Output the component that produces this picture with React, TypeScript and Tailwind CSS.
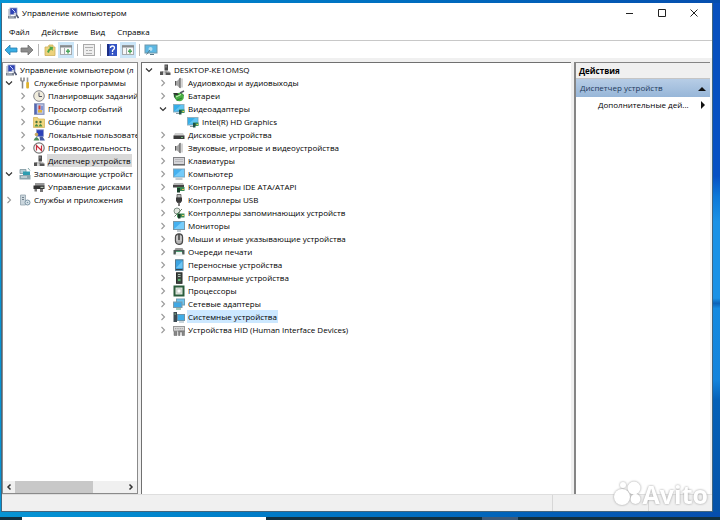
import { ReactNode } from "react";

type IconName =
  | "mgmt" | "tools" | "clock" | "events" | "folders" | "users" | "perf" | "device" | "storage" | "disks" | "services"
  | "speaker" | "battery" | "display" | "drive" | "keyboard" | "computer" | "ide" | "usb" | "storctl" | "monitor"
  | "mouse" | "printer" | "portable" | "software" | "cpu" | "network" | "system" | "hid";

const art: Record<IconName, ReactNode> = {
  mgmt: (
    <>
      <path d="M1 2h3v8H1z" fill="#c9ced8" />
      <rect x="3" y="1" width="7" height="6.500" fill="#2f43b5" stroke="#9aa3c8" strokeWidth=".8" />
      <path d="M5 2l3 3" stroke="#c9d4ff" />
      <path d="M1 9h8v2.500H1z" fill="#77808f" />
      <path d="M2 10h5" stroke="#d5dae2" strokeWidth=".8" />
      <path d="M8 6l3.500 5" stroke="#4a5270" strokeWidth="1.600" />
      <circle cx="8" cy="7" r="1.400" fill="#c9cfe0" />
    </>
  ),
  tools: (
    <>
      <path d="M2 .5v3l1.500 1V11.500M5 .5v3l-1.500 1" stroke="#858585" strokeWidth="1.500" fill="none" />
      <path d="M8.500 .5v5" stroke="#999" strokeWidth="1.600" />
      <rect x="7.200" y="5" width="2.800" height="6.500" rx="1" fill="#dfb32e" />
    </>
  ),
  clock: (
    <>
      <circle cx="6" cy="6" r="5.300" fill="#f0ecdc" stroke="#85858c" />
      <path d="M6 2.500V6.500h3" stroke="#556" fill="none" />
    </>
  ),
  events: (
    <>
      <rect x="1.500" y=".8" width="9.500" height="10.500" fill="#bcc5e4" stroke="#7d89b5" />
      <path d="M2.800 1v10" stroke="#5268b5" strokeWidth="2" />
      <path d="M6.500 2.500v4" stroke="#cf3d33" strokeWidth="2" />
      <rect x="5" y="7" width="4" height="2.500" fill="#e0b63a" />
      <path d="M9 3v4" stroke="#4567c8" />
    </>
  ),
  folders: (
    <>
      <path d="M.5 1.500h4l1 1.500h6v8.500H.5z" fill="#f0d67c" stroke="#d2b052" strokeWidth=".7" />
      <circle cx="3.500" cy="6" r="1.200" fill="#49733d" />
      <circle cx="7.500" cy="6" r="1.200" fill="#49733d" />
      <path d="M1.500 10.500q2-5 4 0M5.500 10.500q2-5 4 0" fill="#4d8e46" />
    </>
  ),
  users: (
    <>
      <rect x="3.500" y=".8" width="7" height="6.500" fill="#2c41b8" stroke="#8e9ac6" strokeWidth=".8" />
      <circle cx="3.500" cy="5.500" r="1.800" fill="#c9a860" />
      <path d="M.5 11.500q3-7 6 0z" fill="#4d8b59" />
      <path d="M6.500 7.500h3l2.500 4H7z" fill="#4358a2" />
    </>
  ),
  perf: (
    <>
      <circle cx="6" cy="6" r="5.200" fill="#fff" stroke="#777" strokeWidth="1.200" />
      <path d="M3.500 8.500v-5l5 5v-5" stroke="#c52e3d" strokeWidth="1.200" fill="none" />
    </>
  ),
  device: (
    <>
      <path d="M5.500 .5h3.500v6H5.500z" fill="#4b4b4b" />
      <path d="M6.500 1.500h1v2h-1z" fill="#aaa" />
      <path d="M2.500 8h8M7 6v3" stroke="#888" />
      <path d="M1 7.500h3v3.500H1zM6.500 8.500h5V11h-5z" fill="#555" />
      <path d="M4 10h3" stroke="#aaa" />
    </>
  ),
  storage: (
    <>
      <path d="M1 1.500h6v4H1z" fill="#b9cfd6" stroke="#7c959e" strokeWidth=".8" />
      <path d="M4 3.500h7V7H4z" fill="#2f9db0" />
      <path d="M.5 7h11v4.500H.5z" fill="#8ca4ac" />
      <path d="M2 9h6" stroke="#eef3f5" />
      <path d="M9 0l2 2.500" stroke="#8aa" />
    </>
  ),
  disks: (
    <>
      <path d="M2 2h9.500v3H2z" fill="#999" />
      <path d="M.5 4.500h11v3.500H.5z" fill="#333" />
      <path d="M1.500 8h2.500v2.500H1.500zM7 8h3v3H7z" fill="#777" />
      <path d="M7.500 6.300h3" stroke="#d5e5d3" />
    </>
  ),
  services: (
    <>
      <path d="M1.500 1h5v10h-5z" fill="#cbd6dd" stroke="#93a3ad" strokeWidth=".8" />
      <path d="M3 3.500h2M3 5.500h2" stroke="#71818d" />
      <circle cx="8.500" cy="8.500" r="2.500" fill="#dbe6ec" stroke="#7c95a5" />
      <circle cx="8.500" cy="8.500" r=".8" fill="#7c95a5" />
    </>
  ),
  speaker: (
    <>
      <path d="M2 4h2l3.500-3.500v11L4 8.500H2z" fill="#a5a5a5" />
      <path d="M2.500 4v4.500M7 1v10" stroke="#555" />
      <path d="M9 1.500v9" stroke="#aaa" fill="none" />
    </>
  ),
  battery: (
    <>
      <path d="M.5 3h8l2.500 2-2 4-5 2-3-4z" fill="#2c5a36" />
      <circle cx="6.500" cy="7" r="4.300" fill="#48b043" />
      <path d="M3 7l5-2.500" stroke="#d1efc2" />
      <path d="M0 3h4l2 2H3z" fill="#333" />
      <path d="M7 3l4-2" stroke="#556" strokeWidth="1.500" />
      <path d="M4 10l5-2" stroke="#2f7a35" />
    </>
  ),
  display: (
    <>
      <rect x=".5" y="1.500" width="10.500" height="7.500" fill="#37aee8" stroke="#8fb0c0" />
      <path d="M1 8.500l7-6.500h2.500v4z" fill="#62c4f2" />
      <path d="M3 10.500h3" stroke="#8899a2" />
      <path d="M6 6.500h5.500V10H6z" fill="#3d9460" />
      <path d="M6 7h2.500v4.500H6z" fill="#1f5145" />
      <path d="M9.500 8.500h1.500" stroke="#eed34c" />
    </>
  ),
  drive: (
    <>
      <path d="M2 4h8l1.500 3H.5z" fill="#cfcfcf" />
      <rect x=".5" y="6.500" width="11" height="3.500" fill="#3a3a3a" />
      <path d="M8 8.500h2" stroke="#70b979" />
    </>
  ),
  keyboard: (
    <>
      <rect x=".5" y="2.500" width="11" height="7" fill="#d5d5d8" stroke="#808084" />
      <path d="M2 4.500h8M2 6.500h8" stroke="#b8b8bc" />
      <path d="M0 10h12" stroke="#555" />
    </>
  ),
  computer: (
    <>
      <rect x=".5" y="1" width="11" height="8" fill="#45b1f0" stroke="#83a5b8" />
      <path d="M1 8.500l8-7h2v7z" fill="#74cbfa" />
      <path d="M2.500 11h7" stroke="#8696a0" />
    </>
  ),
  ide: (
    <>
      <path d="M1 2h9l1 2H0z" fill="#b5b5b5" />
      <path d="M0 4h11v2.500H0z" fill="#444" />
      <rect x="4" y="6" width="7.500" height="4" fill="#3d8a55" />
      <path d="M4 7h3v4.500H4z" fill="#17402a" />
      <path d="M9 8.500h2" stroke="#e2c458" />
    </>
  ),
  usb: (
    <>
      <path d="M4 .5h4V4H4z" fill="#bbb" stroke="#555" strokeWidth=".8" />
      <path d="M3 3.500h6V7L7.500 9h-3L3 7z" fill="#3a3a3a" />
      <path d="M6 8v4" stroke="#555" strokeWidth="1.500" />
    </>
  ),
  storctl: (
    <>
      <circle cx="4" cy="4" r="3" fill="#e0e7df" stroke="#809085" />
      <path d="M1.500 9.500L9 2" stroke="#68806b" />
      <rect x="4" y="6.500" width="7.500" height="4" fill="#3f8d53" />
      <path d="M5 7h2.500v4.500H5z" fill="#193c2a" />
      <path d="M9 8.500h2" stroke="#eed273" />
    </>
  ),
  monitor: (
    <>
      <rect x=".5" y="1.500" width="11" height="8" fill="#45b1f0" stroke="#7898a8" />
      <path d="M1 9l8-7h2v7z" fill="#78cdfa" />
      <path d="M4 11h4" stroke="#84949e" />
    </>
  ),
  mouse: (
    <>
      <rect x="2.500" y=".8" width="7" height="10.500" rx="3.300" fill="#b5b5b5" stroke="#4a4a4a" strokeWidth="1.300" />
      <path d="M6 1v6" stroke="#333" strokeWidth="1.300" />
      <path d="M4 3v5M8 3v5" stroke="#e5e5e5" strokeWidth=".8" />
    </>
  ),
  printer: (
    <>
      <path d="M2.500 2h7L11 5H1z" fill="#999" />
      <path d="M.5 4h11v4.500H.5z" fill="#4b5a55" />
      <path d="M3 6h6l.5 4h-7z" fill="#f0f3f1" />
      <path d="M3 5.500h6" stroke="#4fa678" />
    </>
  ),
  portable: (
    <>
      <rect x="2.500" y=".8" width="7.500" height="10.500" fill="#3ba4e2" stroke="#56788c" />
      <path d="M3 9l6.500-7v7z" fill="#6cc4f4" />
      <path d="M3 10.500h6.500" stroke="#33434e" />
    </>
  ),
  software: (
    <>
      <rect x="3.500" y=".8" width="5.500" height="10.500" fill="#3e4a42" stroke="#2b2b2b" />
      <path d="M5 2.500h2.500M5 4.500h2.500" stroke="#b5beb8" />
      <path d="M5 8h2.500" stroke="#59b56d" strokeWidth="2" />
    </>
  ),
  cpu: (
    <>
      <rect x="1.500" y="1.500" width="9" height="9" fill="#e4ebe3" stroke="#2b5c3c" strokeWidth="2" />
      <rect x="4" y="4" width="4" height="4" fill="#fff" stroke="#a5b0a5" strokeWidth=".6" />
    </>
  ),
  network: (
    <>
      <rect x="3.500" y="1" width="8" height="6" fill="#6cc4f0" stroke="#6f9caf" />
      <rect x=".5" y="4" width="8.500" height="5.500" fill="#3fa8e4" stroke="#7c9ba9" />
      <path d="M3 11h5" stroke="#4b9170" />
    </>
  ),
  system: (
    <>
      <rect x=".5" y="1" width="3.500" height="10" fill="#3d4a52" />
      <path d="M1.500 3h1.500" stroke="#8dc28f" />
      <rect x="4.500" y="3.500" width="7" height="6" fill="#40ade7" stroke="#6d93a8" />
      <path d="M6 11h5" stroke="#9aabb5" />
    </>
  ),
  hid: (
    <>
      <rect x=".5" y="2.500" width="11" height="4.500" fill="#d9d9d9" stroke="#999" />
      <path d="M2 4.700h8" stroke="#999" strokeDasharray="1 .7" />
      <path d="M1 7.500v4h3v-4zM5.500 7v4.500H7V8h2v3.500h2.500V7z" fill="#888" stroke="#666" strokeWidth=".5" />
    </>
  ),
};

function Icon({ name }: { name: IconName }) {
  return (
    <svg viewBox="0 0 12 12" className="size-3 shrink-0" fill="none" aria-hidden="true">
      {art[name]}
    </svg>
  );
}

function Chevron({ open }: { open: boolean }) {
  return (
    <svg viewBox="0 0 8 8" className="size-2" fill="none" aria-hidden="true">
      {open ? (
        <path d="M1 2.500l3 3 3-3" stroke="#333" strokeWidth="1.200" />
      ) : (
        <path d="M2.500 1l3 3-3 3" stroke="#999" strokeWidth="1.100" />
      )}
    </svg>
  );
}

type Item = { label: string; icon: IconName; level: number; open?: boolean; selected?: boolean };

const consoleTree: Item[] = [
  { label: "Управление компьютером (л", icon: "mgmt", level: 0 },
  { label: "Служебные программы", icon: "tools", level: 1, open: true },
  { label: "Планировщик заданий", icon: "clock", level: 2, open: false },
  { label: "Просмотр событий", icon: "events", level: 2, open: false },
  { label: "Общие папки", icon: "folders", level: 2, open: false },
  { label: "Локальные пользовате", icon: "users", level: 2, open: false },
  { label: "Производительность", icon: "perf", level: 2, open: false },
  { label: "Диспетчер устройств", icon: "device", level: 2, selected: true },
  { label: "Запоминающие устройст", icon: "storage", level: 1, open: true },
  { label: "Управление дисками", icon: "disks", level: 2 },
  { label: "Службы и приложения", icon: "services", level: 1, open: false },
];

const deviceTree: Item[] = [
  { label: "DESKTOP-KE1OMSQ", icon: "device", level: 1, open: true },
  { label: "Аудиовходы и аудиовыходы", icon: "speaker", level: 2, open: false },
  { label: "Батареи", icon: "battery", level: 2, open: false },
  { label: "Видеоадаптеры", icon: "display", level: 2, open: true },
  { label: "Intel(R) HD Graphics", icon: "display", level: 3 },
  { label: "Дисковые устройства", icon: "drive", level: 2, open: false },
  { label: "Звуковые, игровые и видеоустройства", icon: "speaker", level: 2, open: false },
  { label: "Клавиатуры", icon: "keyboard", level: 2, open: false },
  { label: "Компьютер", icon: "computer", level: 2, open: false },
  { label: "Контроллеры IDE ATA/ATAPI", icon: "ide", level: 2, open: false },
  { label: "Контроллеры USB", icon: "usb", level: 2, open: false },
  { label: "Контроллеры запоминающих устройств", icon: "storctl", level: 2, open: false },
  { label: "Мониторы", icon: "monitor", level: 2, open: false },
  { label: "Мыши и иные указывающие устройства", icon: "mouse", level: 2, open: false },
  { label: "Очереди печати", icon: "printer", level: 2, open: false },
  { label: "Переносные устройства", icon: "portable", level: 2, open: false },
  { label: "Программные устройства", icon: "software", level: 2, open: false },
  { label: "Процессоры", icon: "cpu", level: 2, open: false },
  { label: "Сетевые адаптеры", icon: "network", level: 2, open: false },
  { label: "Системные устройства", icon: "system", level: 2, open: false, selected: true },
  { label: "Устройства HID (Human Interface Devices)", icon: "hid", level: 2, open: false },
];

const indents = ["pl-0", "pl-0", "pl-3.5", "pl-7"];

function Tree({ items, label, highlight }: { items: Item[]; label: string; highlight: string }) {
  return (
    <ul role="tree" aria-label={label}>
      {items.map((item) => (
        <li
          key={item.label}
          role="treeitem"
          aria-level={item.level + 1}
          aria-expanded={item.open}
          aria-selected={!!item.selected}
          className={`flex h-[13px] items-center ${indents[item.level]}`}
        >
          {item.level > 0 && (
            <span className="flex w-3.5 shrink-0 items-center">
              {item.open !== undefined && (
                <button aria-label={item.label}>
                  <Chevron open={item.open} />
                </button>
              )}
            </span>
          )}
          <Icon name={item.icon} />
          <span className={`ml-0.5 px-px leading-[13px] whitespace-nowrap ${item.selected ? highlight : ""}`}>
            {item.label}
          </span>
        </li>
      ))}
    </ul>
  );
}

function Tool({ label, active, children }: { label: string; active?: boolean; children: ReactNode }) {
  return (
    <button
      aria-label={label}
      className={`flex size-4 items-center justify-center ${active ? "bg-[#cce6f8]" : ""}`}
    >
      <svg viewBox="0 0 14 14" className="size-3.5" fill="none" aria-hidden="true">
        {children}
      </svg>
    </button>
  );
}

const Separator = () => <span className="h-3 w-px bg-[#b5b5b5]" />;

const paneArt = (
  <>
    <rect x="1.500" y="2.500" width="11" height="9" fill="#f7f7f7" stroke="#a5a9ac" />
    <path d="M1 3.500h12" stroke="#858a8e" strokeWidth="2" />
    <path d="M5.500 5v6" stroke="#a5aaad" />
    <path d="M9 6v4.500M7 8.300h4" stroke="#4ba85c" strokeWidth="1.500" />
  </>
);

function TitleBar() {
  return (
    <header className="flex h-5 shrink-0 items-center bg-white pl-[5px]">
      <Icon name="mgmt" />
      <h1 className="ml-[3px] flex-1">Управление компьютером</h1>
      <button aria-label="Свернуть" className="flex w-8 justify-center">
        <svg viewBox="0 0 8 8" className="size-2" stroke="#222"><path d="M0 4.500h7" /></svg>
      </button>
      <button aria-label="Развернуть" className="flex w-8 justify-center">
        <svg viewBox="0 0 8 8" className="size-2" stroke="#222" fill="none"><path d="M.5.5h7v7h-7z" /></svg>
      </button>
      <button aria-label="Закрыть" className="mr-0.5 flex w-8 justify-center">
        <svg viewBox="0 0 8 8" className="size-2" stroke="#222"><path d="M.5.5l7 7M7.500.5l-7 7" /></svg>
      </button>
    </header>
  );
}

function Toolbar() {
  return (
    <div
      role="toolbar"
      aria-label="Панель инструментов"
      className="flex h-[18px] shrink-0 items-center gap-[3px] border-t border-[#c8c8c8] bg-white pl-px"
    >
      <div className="flex">
        <Tool label="Назад">
          <path d="M1 7l5-5v3h7v4H6v3z" fill="#38aee5" stroke="#2a7fae" strokeWidth=".8" />
        </Tool>
        <Tool label="Вперед">
          <path d="M13 7L8 2v3H1v4h7v3z" fill="#8c8c8c" stroke="#707070" strokeWidth=".8" />
        </Tool>
      </div>
      <Separator />
      <div className="flex">
        <Tool label="Вверх">
          <path d="M2 4h3l1-2h4v2h2v8.500H2z" fill="#edd27c" stroke="#cdb05c" strokeWidth=".8" />
          <path d="M4 9q1-3 3-4L6 3.500l4 .5-.5 4L8.300 6.500Q6 7.500 6 10z" fill="#4aa64b" />
        </Tool>
        <Tool label="Дерево консоли" active>{paneArt}</Tool>
      </div>
      <Separator />
      <Tool label="Свойства">
        <rect x="1.500" y="1.500" width="11" height="11" fill="#eee" stroke="#aaa" />
        <path d="M3 4.500h8M4 7.500h2M7 7.500h3M4 10.500h6" stroke="#b0b0b0" />
      </Tool>
      <Separator />
      <div className="flex">
        <Tool label="Справка">
          <rect x="2" y="1" width="10" height="12" fill="#3454c4" />
          <path d="M3 1v12" stroke="#1c2f85" strokeWidth="2" />
          <path d="M5.500 5q0-2 2-2t2 2q0 1-2 2.500V9M7.500 10v1.500" stroke="#fff" strokeWidth="1.300" />
        </Tool>
        <Tool label="Панель действий" active>{paneArt}</Tool>
      </div>
      <Separator />
      <Tool label="Обновить конфигурацию">
        <rect x="1" y="2" width="12" height="8" fill="#5cb8e4" stroke="#6f98ab" />
        <circle cx="6.500" cy="6" r="2" fill="#b6e2f5" />
        <path d="M6 7l-3.500 4.500M6 11.500h4" stroke="#58798a" />
      </Tool>
    </div>
  );
}

function Watermark() {
  return (
    <div className="absolute right-1 bottom-1 flex items-center text-white drop-shadow-[0_0_1px_#999]">
      <svg viewBox="0 0 28 26" className="h-[26px] w-7" fill="currentColor" aria-hidden="true">
        <circle cx="9" cy="16" r="8" />
        <circle cx="21" cy="7" r="6.500" />
        <circle cx="22.500" cy="18" r="5" />
        <circle cx="10" cy="4" r="3" />
      </svg>
      <span className="ml-0.5 text-[25px] leading-[26px] font-bold">Avito</span>
    </div>
  );
}

export default function App() {
  return (
    <div className="flex h-screen flex-col bg-linear-to-r from-[#0695d5] to-[#064eae] font-['Open_Sans','Noto_Sans',sans-serif] text-[8px] text-black">
      <div className="flex min-h-0 flex-1 pt-[3px] pb-[5px] pl-px">
        <main className="relative flex min-w-0 flex-1 flex-col border border-t-0 border-[#43667e] bg-[#f0f0f0]">
          <TitleBar />
          <nav aria-label="Меню" className="flex h-[17px] shrink-0 items-center gap-3 bg-white pl-[7px]">
            <button>Файл</button>
            <button>Действие</button>
            <button>Вид</button>
            <button>Справка</button>
          </nav>
          <Toolbar />

          <div className="mt-1 mr-0.5 flex min-h-0 flex-1 gap-[3px]">
            <aside className="flex w-34 shrink-0 flex-col overflow-hidden border border-[#8a8a8a] bg-white">
              <div className="min-h-0 flex-1 overflow-hidden pl-0.5">
                <Tree items={consoleTree} label="Консоль" highlight="bg-[#d9d9d9]" />
              </div>
              <div className="flex h-3 items-center bg-[#f0f0f0]">
                <button aria-label="Влево" className="flex w-3 justify-center">
                  <svg viewBox="0 0 6 8" className="h-2 w-1.5" fill="none" stroke="#333" strokeWidth="1.500">
                    <path d="M4.500 1.500L2 4l2.500 2.500" />
                  </svg>
                </button>
                <div className="h-full flex-1">
                  <div className="h-full w-[71%] bg-[#c8c8c8]" />
                </div>
                <button aria-label="Вправо" className="flex w-3 justify-center">
                  <svg viewBox="0 0 6 8" className="h-2 w-1.5" fill="none" stroke="#333" strokeWidth="1.500">
                    <path d="M1.500 1.500L4 4 1.500 6.500" />
                  </svg>
                </button>
              </div>
            </aside>

            <section className="min-w-0 flex-1 overflow-hidden border-t border-l border-[#707070] bg-white pl-[3px]">
              <Tree items={deviceTree} label="Устройства" highlight="bg-[#cce8ff]" />
            </section>

            <aside className="w-34 shrink-0 border-t border-l-2 border-[#858585] bg-white">
              <h2 className="h-4 border-b border-[#c5c5c5] bg-[#f0f0f0] pl-[3px] leading-4 font-bold">Действия</h2>
              <button className="flex h-[18px] w-full items-center justify-between bg-linear-to-b from-[#b7cde6] to-[#97b6d8] px-1 whitespace-nowrap text-[#1e395b]">
                Диспетчер устройств
                <svg viewBox="0 0 8 5" className="h-[5px] w-2" fill="#111"><path d="M0 5l4-4 4 4z" /></svg>
              </button>
              <button className="flex h-4 w-full items-center justify-between pr-1 pl-[22px] whitespace-nowrap">
                Дополнительные дей...
                <svg viewBox="0 0 5 8" className="h-2 w-[5px]" fill="#111"><path d="M0 0l4 4-4 4z" /></svg>
              </button>
            </aside>
          </div>

          <footer className="flex h-[17px] shrink-0 border-t border-[#dedede]">
            <span className="flex-1" />
            <span className="w-24 border-l border-[#d7d7d7]" />
            <span className="w-16 border-l border-[#d7d7d7]" />
          </footer>
          <Watermark />
        </main>
        <div className="w-[7px] shrink-0 bg-[linear-gradient(#0750bd_0%,#0750c4_34%,#0d78d8_38%,#1b92e6_43%,#1b92e6_58%,#0b62b8_59%,#158ae0_60%,#1484dc_74%,#0561b8_78%,#0552a8_100%)]" />
      </div>
      <div className="flex h-[3px] shrink-0 bg-[#12303f]">
        <div className="ml-[3%] w-[34%] bg-white" />
        <div className="ml-[30%] w-[5%] bg-[#3d5a78]" />
      </div>
    </div>
  );
}
